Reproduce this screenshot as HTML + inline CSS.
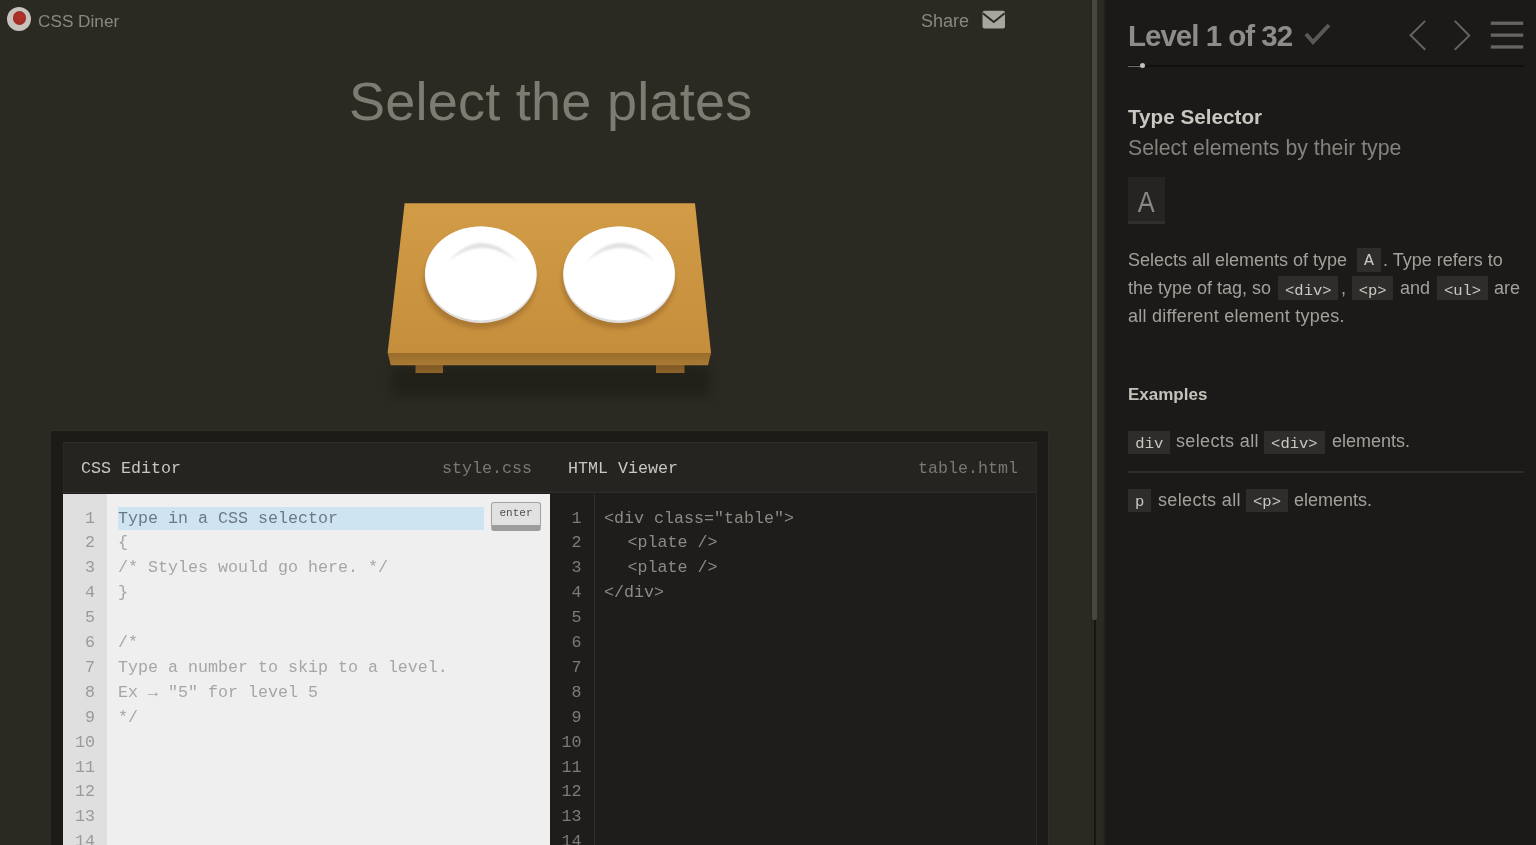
<!DOCTYPE html>
<html><head><meta charset="utf-8">
<style>
*{margin:0;padding:0;box-sizing:border-box}
html,body{width:1536px;height:845px;overflow:hidden;background:#2a2922}
body{position:relative;font-family:"Liberation Sans",sans-serif}
.a{position:absolute;white-space:pre}
.mono{font-family:"Liberation Mono",monospace}
</style></head>
<body><div style="position:absolute;left:0;top:0;width:1536px;height:845px;will-change:transform">
<!-- left header -->
<div class="a" style="left:7px;top:7px;width:24px;height:24px;border-radius:50%;background:#c7c3bd"></div>
<div class="a" style="left:12.5px;top:11.3px;width:13.5px;height:13.5px;border-radius:50%;background:radial-gradient(circle at 50% 45%,#b0342b 0,#a52f27 55%,#8c2a22 100%)"></div>
<div class="a" style="left:38px;top:9px;font-size:17.2px;line-height:24px;color:#8a8780">CSS Diner</div>

<div class="a" style="left:921px;top:9px;font-size:18px;line-height:24px;color:#8a8780">Share</div>
<svg class="a" style="left:982px;top:10px" width="24" height="19" viewBox="0 0 24 19"><rect x="0.5" y="0.8" width="22.5" height="17.6" rx="2" fill="#a7a59f"/><path d="M0.8 3.2 L11.75 12 L22.7 3.2" stroke="#2a2922" stroke-width="1.9" fill="none"/></svg>

<div class="a" style="left:349px;top:66px;font-size:54px;line-height:70px;letter-spacing:0.25px;color:#7e7b73">Select the plates</div>

<!-- table -->
<div class="a" style="left:392px;top:366px;width:318px;height:30px;background:rgba(10,10,5,0.28);filter:blur(5px)"></div>
<svg class="a" style="left:0;top:0" width="1100" height="430" viewBox="0 0 1100 430">
  <defs>
    <linearGradient id="tg" x1="0" y1="0" x2="0" y2="1"><stop offset="0" stop-color="#d29b46"/><stop offset="1" stop-color="#c58e3c"/></linearGradient>
    <filter id="bl" x="-20%" y="-50%" width="140%" height="200%"><feGaussianBlur stdDeviation="6"/></filter>
  </defs>
  
  <rect x="415.5" y="364" width="27.5" height="9" fill="url(#lg)"/>
  <rect x="656" y="364" width="28.5" height="9" fill="url(#lg)"/>
  <linearGradient id="fe" x1="0" y1="0" x2="0" y2="1"><stop offset="0" stop-color="#9a6d2c"/><stop offset="1" stop-color="#a97b34"/></linearGradient>
  <linearGradient id="lg" x1="0" y1="0" x2="0" y2="1"><stop offset="0" stop-color="#7b5524"/><stop offset="1" stop-color="#8c6329"/></linearGradient>
  <polygon points="387.6,353 711,353 708,365.3 390.8,365.3" fill="url(#fe)"/>
  <polygon points="404.6,203.3 695,203.3 711,353 387.6,353" fill="url(#tg)"/>
  <!-- plates -->
  <filter id="ps" x="-20%" y="-20%" width="140%" height="140%"><feGaussianBlur stdDeviation="2"/></filter>
  <filter id="ab" x="-20%" y="-50%" width="140%" height="200%"><feGaussianBlur stdDeviation="0.9"/></filter>
  <g>
    <ellipse cx="480" cy="280.5" rx="56.5" ry="48.3" fill="#a97731" opacity="0.9" filter="url(#ps)"/>
    <ellipse cx="480.8" cy="274.7" rx="56" ry="48.3" fill="#dedede"/>
    <ellipse cx="480.8" cy="273.4" rx="55.6" ry="47" fill="#ffffff"/>
    <path d="M447.7 262 Q482 224 517.3 262 Q482 233.5 447.7 262 Z" fill="#e0e0e0" filter="url(#ab)"/>
  </g>
  <g>
    <ellipse cx="618.3" cy="280.5" rx="56.5" ry="48.3" fill="#a97731" opacity="0.9" filter="url(#ps)"/>
    <ellipse cx="619.1" cy="274.7" rx="56" ry="48.3" fill="#dedede"/>
    <ellipse cx="619.1" cy="273.4" rx="55.6" ry="47" fill="#ffffff"/>
    <path d="M586 262 Q620.3 224 655.6 262 Q620.3 233.5 586 262 Z" fill="#e0e0e0" filter="url(#ab)"/>
  </g>
</svg>

<!-- editor frame -->
<div class="a" style="left:51px;top:431px;width:996.8px;height:430px;background:#1c1b17;border-radius:3px;box-shadow:0 0 0 1px #2e2d27"></div>
<div class="a" style="left:62.5px;top:442px;width:974.5px;height:420px;background:#1e1d1b;border:1px solid #2a2925;border-top-color:#302f2b"></div>
<!-- headers -->
<div class="a" style="left:63.5px;top:443px;width:972.5px;height:50px;background:#252420;border-bottom:1px solid #2e2d29"></div>
<div class="a mono" style="left:81px;top:456.5px;font-size:16.67px;line-height:24px;color:#c9c6bf">CSS Editor</div>
<div class="a mono" style="left:442px;top:456.5px;font-size:16.67px;line-height:24px;color:#7a7872">style.css</div>
<div class="a mono" style="left:568px;top:456.5px;font-size:16.67px;line-height:24px;color:#c9c6bf">HTML Viewer</div>
<div class="a mono" style="left:918px;top:456.5px;font-size:16.67px;line-height:24px;color:#7a7872">table.html</div>

<!-- css editor body -->
<div class="a" style="left:62.5px;top:494px;width:487.5px;height:360px;background:#efefef"></div>
<div class="a" style="left:62.5px;top:494px;width:44.5px;height:360px;background:#dfdfdf"></div>
<div class="a" style="left:118px;top:506.7px;width:366.3px;height:23.5px;background:#cfe4f1"></div>
<div class="a" style="left:491px;top:502px;width:50px;height:29px;background:#e1e1e1;border:1px solid #a3a3a3;border-bottom:6.5px solid #9d9d9d;border-radius:3px"></div>
<div class="a mono" style="left:491px;top:505.2px;width:50px;text-align:center;font-size:11px;line-height:16px;color:#505050">enter</div>

<div class="a mono" id="cssnums" style="left:62.5px;top:506.5px;width:32.5px;text-align:right;font-size:16.67px;line-height:24.9px;color:#9a9a9a">1
2
3
4
5
6
7
8
9
10
11
12
13
14</div>
<div class="a mono" style="left:118px;top:506.5px;font-size:16.67px;line-height:24.9px;color:#a6a6a6"><span style="color:#6a7a85">Type in a CSS selector</span>
{
/* Styles would go here. */
}

/*
Type a number to skip to a level.
Ex → "5" for level 5
*/</div>

<!-- html viewer body -->
<div class="a" style="left:550px;top:494px;width:486px;height:360px;background:#1e1d1b"></div>
<div class="a" style="left:594px;top:494px;width:1px;height:360px;background:#2f2e2a"></div>
<div class="a mono" style="left:550px;top:506.5px;width:31.5px;text-align:right;font-size:16.67px;line-height:24.9px;color:#7d7b76">1
2
3
4
5
6
7
8
9
10
11
12
13
14</div>
<div class="a mono" style="left:604px;top:506.5px;font-size:16.67px;line-height:24.9px;color:#8d8a84">&lt;div class="table"&gt;
<span style="padding-left:23.5px">&lt;plate /&gt;</span>
<span style="padding-left:23.5px">&lt;plate /&gt;</span>
&lt;/div&gt;</div>

<!-- scrollbar -->
<div class="a" style="left:1091px;top:0;width:1px;height:845px;background:#25241e"></div>
<div class="a" style="left:1092px;top:0;width:5px;height:620px;background:#47463f;border-radius:0 0 2px 2px"></div>
<div class="a" style="left:1093.5px;top:620px;width:2px;height:225px;background:#16160f"></div>

<!-- right panel -->
<div class="a" style="left:1102.5px;top:0;width:3.5px;height:845px;background:linear-gradient(90deg,#2a2922,#1b1a18)"></div>
<div class="a" style="left:1106px;top:0;width:430px;height:845px;background:#1b1a18"></div>

<div class="a" style="left:1128px;top:18px;font-size:29.5px;line-height:36px;font-weight:bold;letter-spacing:-1px;color:#8e8c88">Level 1 of 32</div>
<svg class="a" style="left:1300px;top:20px" width="36" height="30" viewBox="0 0 36 30"><path d="M6 14 L13 22 L29 5" stroke="#5b5955" stroke-width="4" fill="none"/></svg>
<svg class="a" style="left:1400px;top:14px" width="136" height="44" viewBox="1400 14 136 44">
  <path d="M1425.2 20.9 L1410.6 35.3 L1425.2 49.7" stroke="#676561" stroke-width="1.9" fill="none"/>
  <path d="M1454.8 20.9 L1469.2 35.6 L1454.8 49.7" stroke="#676561" stroke-width="1.9" fill="none"/>
  <rect x="1490.8" y="21.6" width="32.4" height="3.3" fill="#676561"/>
  <rect x="1490.8" y="33.5" width="32.4" height="3.3" fill="#676561"/>
  <rect x="1490.8" y="45.3" width="32.4" height="3.3" fill="#676561"/>
</svg>
<div class="a" style="left:1128px;top:65px;width:396px;height:2px;background:#0f0f0e"></div>
<div class="a" style="left:1128px;top:65.5px;width:15px;height:1px;background:#6f6d69"></div>
<div class="a" style="left:1140.2px;top:63.2px;width:5px;height:5px;border-radius:50%;background:#c4c1bb"></div>

<div class="a" style="left:1128px;top:103px;font-size:20.7px;line-height:28px;font-weight:bold;color:#cac7c1">Type Selector</div>
<div class="a" style="left:1128px;top:134px;font-size:21.3px;line-height:28px;color:#85827d">Select elements by their type</div>
<div class="a" style="left:1128px;top:177px;width:36.5px;height:47px;background:#252422;border-bottom:3px solid #302f2c"></div>
<div class="a" style="left:1128px;top:183.5px;width:36.5px;text-align:center;font-size:29.5px;line-height:36px;color:#8a8782;transform:scaleX(0.86)">A</div>

<!-- description -->
<div class="a" style="left:1356.9px;top:247.8px;width:24px;height:24px;background:#2e2d2b"></div>
<div class="a" style="left:1278.3px;top:276.4px;width:60px;height:23.3px;background:#2e2d2b"></div>
<div class="a" style="left:1351.9px;top:276.4px;width:41.4px;height:23.3px;background:#2e2d2b"></div>
<div class="a" style="left:1437px;top:276.4px;width:51px;height:23.3px;background:#2e2d2b"></div>
<div class="a" style="left:1128px;top:250px;font-size:18px;line-height:20px;color:#a3a09a">Selects all elements of type</div>
<div class="a mono" style="left:1356.9px;top:251px;width:24px;text-align:center;font-size:16.5px;line-height:20px;color:#cbc8c2">A</div>
<div class="a" style="left:1383px;top:250px;font-size:18px;line-height:20px;color:#a3a09a">. Type refers to</div>
<div class="a" style="left:1128px;top:278px;font-size:18px;line-height:20px;color:#a3a09a">the type of tag, so</div>
<div class="a mono" style="left:1278.3px;top:280.5px;width:60px;text-align:center;font-size:15.5px;line-height:20px;color:#cbc8c2">&lt;div&gt;</div>
<div class="a" style="left:1341px;top:278px;font-size:18px;line-height:20px;color:#a3a09a">,</div>
<div class="a mono" style="left:1351.9px;top:280.5px;width:41.4px;text-align:center;font-size:15.5px;line-height:20px;color:#cbc8c2">&lt;p&gt;</div>
<div class="a" style="left:1400px;top:278px;font-size:18px;line-height:20px;color:#a3a09a">and</div>
<div class="a mono" style="left:1437px;top:280.5px;width:51px;text-align:center;font-size:15.5px;line-height:20px;color:#cbc8c2">&lt;ul&gt;</div>
<div class="a" style="left:1494px;top:278px;font-size:18px;line-height:20px;color:#a3a09a">are</div>
<div class="a" style="left:1128px;top:305.5px;font-size:18px;line-height:20px;letter-spacing:0.25px;color:#a3a09a">all different element types.</div>

<!-- examples -->
<div class="a" style="left:1128px;top:385px;font-size:17px;line-height:20px;font-weight:bold;color:#c5c2bc">Examples</div>
<div class="a" style="left:1128.2px;top:430.7px;width:42.2px;height:23.3px;background:#2e2d2b"></div>
<div class="a" style="left:1264px;top:430.7px;width:60.7px;height:23.3px;background:#2e2d2b"></div>
<div class="a mono" style="left:1128.2px;top:434.2px;width:42.2px;text-align:center;font-size:15.5px;line-height:20px;color:#cbc8c2">div</div>
<div class="a" style="left:1176px;top:431.3px;font-size:18px;line-height:20px;letter-spacing:0.35px;color:#a3a09a">selects all</div>
<div class="a mono" style="left:1264px;top:434.2px;width:60.7px;text-align:center;font-size:15.5px;line-height:20px;color:#cbc8c2">&lt;div&gt;</div>
<div class="a" style="left:1332px;top:431.3px;font-size:18px;line-height:20px;color:#a3a09a">elements.</div>
<div class="a" style="left:1128px;top:471px;width:396px;height:1.5px;background:#2d2c29"></div>
<div class="a" style="left:1128.2px;top:489px;width:22.7px;height:23.3px;background:#2e2d2b"></div>
<div class="a" style="left:1246px;top:489px;width:42px;height:23.3px;background:#2e2d2b"></div>
<div class="a mono" style="left:1128.2px;top:492px;width:22.7px;text-align:center;font-size:15.5px;line-height:20px;color:#cbc8c2">p</div>
<div class="a" style="left:1158px;top:489.8px;font-size:18px;line-height:20px;letter-spacing:0.35px;color:#a3a09a">selects all</div>
<div class="a mono" style="left:1246px;top:492px;width:42px;text-align:center;font-size:15.5px;line-height:20px;color:#cbc8c2">&lt;p&gt;</div>
<div class="a" style="left:1294px;top:489.8px;font-size:18px;line-height:20px;color:#a3a09a">elements.</div>

</div></body></html>
